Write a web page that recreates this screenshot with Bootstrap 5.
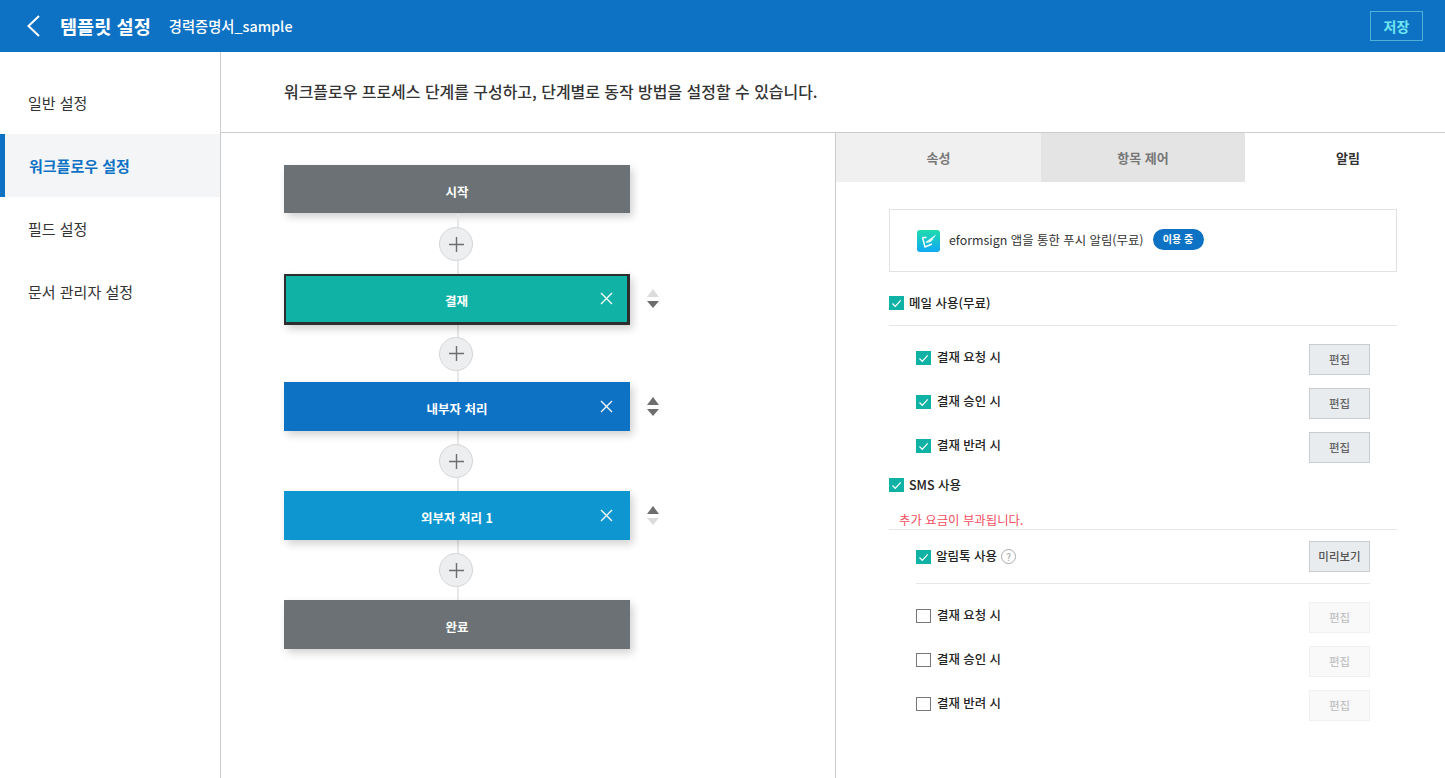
<!DOCTYPE html>
<html lang="ko">
<head>
  <meta charset="UTF-8" />
  <meta name="viewport" content="width=device-width, initial-scale=1" />
  <title>템플릿 설정</title>
  <link href="https://cdn.jsdelivr.net/npm/bootstrap@5.3.0/dist/css/bootstrap.min.css" rel="stylesheet" />
  <style>
    body {
      font-family: "Noto Sans CJK KR", "Noto Sans", sans-serif;
      font-size: 13px;
      color: #222;
      background: #fff;
      overflow: hidden;
    }
    .top-bar { height: 52px; background: #0e72c4; color: #fff; padding: 0 22px 0 26px; }
    .back-icon { width: 14px; height: 22px; margin-right: 20px; }
    .page-title { font-size: 18.6px; font-weight: 700; margin: 0 18px 0 0; }
    .doc-name { font-size: 14.3px; font-weight: 500; }
    .save-btn {
      width: 53px; height: 30px; padding: 0; border: 1px solid #4fb0d8; border-radius: 0;
      color: #6fe6f2; font-size: 14px; font-weight: 700; background: transparent;
    }
    .work-area { height: 726px; }
    .side-menu { width: 221px; padding-top: 19px; border-right: 1px solid #ccc; flex-shrink: 0; }
    .side-menu .nav-link {
      height: 63px; line-height: 63px; padding: 0 0 0 28px; color: #333; font-size: 15px;
    }
    .side-menu .nav-link.active {
      background: #f4f5f7; color: #0e72c4; font-weight: 700; border-left: 5px solid #0e72c4; padding-left: 24px;
    }
    .intro-bar { height: 81px; padding-left: 63px; border-bottom: 1px solid #ccc; font-size: 15.95px; font-weight: 500; color: #333; }
    .flow-pane { width: 615px; padding: 32px 0 0 63px; border-right: 1px solid #ccc; flex-shrink: 0; }
    .flow-row { width: 378px; }
    .flow-node {
      width: 346px; height: 49px; padding-top: 5px; color: #fff; font-size: 12.5px; font-weight: 700;
      box-shadow: 3px 4px 8px rgba(0, 0, 0, .18); flex-shrink: 0;
    }
    .node-gray { background: #6b7174; }
    .node-first { height: 48px; padding-top: 6px; margin-bottom: 1px; }
    .node-green { background: #10b2a5; height: 51px; padding-top: 4px; border-style: solid; border-color: #2d2d2d; border-width: 2px 3px 3px 2px; }
    .node-blue { background: #0e72c4; }
    .node-sky { background: #0e96d0; }
    .node-close { position: absolute; top: 18px; right: 17px; width: 13px; height: 13px; }
    .node-green .node-close { top: 16px; right: 14px; }
    .order-arrows { margin-left: 17px; gap: 4px; }
    .node-green + .order-arrows { margin-bottom: 3px; }
    .arrow-up, .arrow-down { width: 0; height: 0; border-left: 6.5px solid transparent; border-right: 6.5px solid transparent; }
    .arrow-up { border-bottom: 8px solid #6d6d6d; }
    .arrow-down { border-top: 7px solid #6d6d6d; }
    .arrow-up.off { border-bottom-color: #dcdcdc; }
    .arrow-down.off { border-top-color: #dcdcdc; }
    .flow-link { width: 346px; height: 60px; }
    .flow-link.after-selected { height: 57px; }
    .link-line { width: 2px; flex: 1; background: #e8e8e8; margin-left: 2px; }
    .add-step {
      width: 34px; height: 34px; padding: 0; border-radius: 50%; border: 1px solid #d4d6d8; background: #eceef0;
      margin-right: 2px; flex-shrink: 0;
    }
    .add-step svg { display: block; margin: auto; }
    .option-pane { width: 609px; }
    .option-tabs { height: 49px; }
    .option-tabs .nav-link {
      height: 49px; line-height: 50px; padding: 0; border-radius: 0; color: #777; font-size: 13px; font-weight: 700;
      background: #f0f0f0;
    }
    .option-tabs .tab-one { width: 205px; }
    .option-tabs .tab-two { width: 204px; background: #e4e4e4; }
    .option-tabs .tab-three { width: 200px; padding-left: 6px; }
    .option-tabs .nav-link.active { background: #fff; color: #333; }
    .option-body { padding: 27px 48px 0 53px; }
    .push-box { height: 63px; border: 1px solid #e2e2e2; padding-left: 27px; margin-bottom: 24px; }
    .app-logo { width: 23px; height: 22px; margin-right: 9px; }
    .push-text { color: #333; font-size: 12.4px; }
    .in-use { width: 51px; height: 21px; margin-left: 9px; margin-bottom: 2px; padding: 0; line-height: 20px; background: #0e72c4; font-size: 10px; font-weight: 700; }
    .form-check-input.mark-box {
      width: 15px; height: 14px; margin: 0 5px 0 0; border-radius: 0; border: 1px solid #777; flex-shrink: 0;
    }
    .form-check-input.mark-box:checked {
      background-color: #10b2a5; border-color: #10b2a5;
      background-image: url("data:image/svg+xml,%3csvg xmlns='http://www.w3.org/2000/svg' viewBox='0 0 15 14'%3e%3cpath fill='none' stroke='%23fff' stroke-width='1.2' d='M3.5 7.5l2.8 2.8 5.4-6'/%3e%3c/svg%3e");
      background-size: 15px 14px;
    }
    .check-label { color: #222; font-size: 12.5px; font-weight: 500; }
    .main-check { height: 14px; }
    .mail-check { margin-bottom: 15px; }
    .sep-line { height: 1px; background: #e6e6e6; }
    .sub-rows { padding: 10px 27px; }
    .sub-row { height: 44px; }
    .sub-row .mark-box { margin-right: 6px; }
    .sub-row .check-label { font-size: 12.4px; padding-bottom: 2px; }
    .edit-btn {
      width: 61px; height: 31px; margin-top: 3px; padding: 0; border-radius: 0; border: 1px solid #c9cdd0; background: #e9ecef;
      color: #666; font-size: 11.5px; font-weight: 500;
    }
    .edit-btn.preview { color: #555; margin-top: 0; }
    .edit-btn:disabled { background: #f9f9f9; border-color: #f0f0f0; color: #c4c4c4; opacity: 1; }
    .fee-note { color: #f04e5e; font-size: 12.4px; line-height: 14px; padding-left: 10px; margin-top: 21px; height: 16px; }
    .help-mark {
      width: 15px; height: 15px; margin-left: 4px; border: 1px solid #aaa; border-radius: 50%; color: #999;
      font-size: 10px; line-height: 13px; text-align: center;
    }
    .talk-rows { padding: 0 27px; }
    .talk-row { height: 53px; }
    .talk-row .mark-box { margin-right: 5px; }
    .talk-line { margin: 0 27px; }
  </style>
</head>
<body>

  <header class="top-bar d-flex align-items-center">
    <svg class="back-icon" viewBox="0 0 14 22"><path d="M13 1 2.5 11 13 21" fill="none" stroke="#fff" stroke-width="2"/></svg>
    <h1 class="page-title">템플릿 설정</h1>
    <span class="doc-name">경력증명서_sample</span>
    <button class="btn save-btn ms-auto" type="button">저장</button>
  </header>

  <div class="work-area d-flex">
    <nav class="side-menu nav flex-column flex-nowrap">
      <a class="nav-link" href="#">일반 설정</a>
      <a class="nav-link active" href="#">워크플로우 설정</a>
      <a class="nav-link" href="#">필드 설정</a>
      <a class="nav-link" href="#">문서 관리자 설정</a>
    </nav>

    <main class="flex-grow-1 d-flex flex-column">
      <div class="intro-bar d-flex align-items-center">워크플로우 프로세스 단계를 구성하고, 단계별로 동작 방법을 설정할 수 있습니다.</div>

      <div class="d-flex flex-grow-1">
        <section class="flow-pane">
          <div class="flow-row d-flex align-items-center">
            <div class="flow-node node-gray node-first d-flex align-items-center justify-content-center">시작</div>
          </div>
          <div class="flow-link d-flex flex-column align-items-center">
            <span class="link-line"></span>
            <button class="btn add-step" type="button"><svg width="15" height="15" viewBox="0 0 15 15"><path d="M7.5 0v15M0 7.5h15" stroke="#6e6e6e" stroke-width="1.4"/></svg></button>
            <span class="link-line"></span>
          </div>

          <div class="flow-row d-flex align-items-center">
            <div class="flow-node node-green position-relative d-flex align-items-center justify-content-center">결재
              <svg class="node-close" viewBox="0 0 13 13"><path d="M1 1l11 11M12 1 1 12" stroke="#fff" stroke-width="1.3"/></svg>
            </div>
            <div class="order-arrows d-flex flex-column">
              <span class="arrow-up off"></span>
              <span class="arrow-down"></span>
            </div>
          </div>
          <div class="flow-link after-selected d-flex flex-column align-items-center">
            <span class="link-line"></span>
            <button class="btn add-step" type="button"><svg width="15" height="15" viewBox="0 0 15 15"><path d="M7.5 0v15M0 7.5h15" stroke="#6e6e6e" stroke-width="1.4"/></svg></button>
            <span class="link-line"></span>
          </div>

          <div class="flow-row d-flex align-items-center">
            <div class="flow-node node-blue position-relative d-flex align-items-center justify-content-center">내부자 처리
              <svg class="node-close" viewBox="0 0 13 13"><path d="M1 1l11 11M12 1 1 12" stroke="#fff" stroke-width="1.3"/></svg>
            </div>
            <div class="order-arrows d-flex flex-column">
              <span class="arrow-up"></span>
              <span class="arrow-down"></span>
            </div>
          </div>
          <div class="flow-link d-flex flex-column align-items-center">
            <span class="link-line"></span>
            <button class="btn add-step" type="button"><svg width="15" height="15" viewBox="0 0 15 15"><path d="M7.5 0v15M0 7.5h15" stroke="#6e6e6e" stroke-width="1.4"/></svg></button>
            <span class="link-line"></span>
          </div>

          <div class="flow-row d-flex align-items-center">
            <div class="flow-node node-sky position-relative d-flex align-items-center justify-content-center">외부자 처리 1
              <svg class="node-close" viewBox="0 0 13 13"><path d="M1 1l11 11M12 1 1 12" stroke="#fff" stroke-width="1.3"/></svg>
            </div>
            <div class="order-arrows d-flex flex-column">
              <span class="arrow-up"></span>
              <span class="arrow-down off"></span>
            </div>
          </div>
          <div class="flow-link d-flex flex-column align-items-center">
            <span class="link-line"></span>
            <button class="btn add-step" type="button"><svg width="15" height="15" viewBox="0 0 15 15"><path d="M7.5 0v15M0 7.5h15" stroke="#6e6e6e" stroke-width="1.4"/></svg></button>
            <span class="link-line"></span>
          </div>

          <div class="flow-row d-flex align-items-center">
            <div class="flow-node node-gray d-flex align-items-center justify-content-center">완료</div>
          </div>
        </section>

        <section class="option-pane">
          <ul class="option-tabs nav flex-nowrap text-center">
            <li class="nav-item"><a class="nav-link tab-one" href="#">속성</a></li>
            <li class="nav-item"><a class="nav-link tab-two" href="#">항목 제어</a></li>
            <li class="nav-item"><a class="nav-link tab-three active" href="#">알림</a></li>
          </ul>

          <div class="option-body">
            <div class="push-box d-flex align-items-center">
              <svg class="app-logo" viewBox="0 0 23 22">
                <defs><linearGradient id="logoFill" x1="0" y1="0" x2="0" y2="1"><stop offset="0" stop-color="#1fdcab"/><stop offset="1" stop-color="#10a8f5"/></linearGradient></defs>
                <rect width="23" height="22" rx="3" fill="url(#logoFill)"/>
                <path d="M5.5 7.5h4M5.5 7.5l2.5 9.5 7-3" fill="none" stroke="#fff" stroke-width="1.4"/>
                <path d="M8.5 12 19 4.5l-1.5 3-2 1 1 .5-3 3-4 1z" fill="#dffaf6"/>
              </svg>
              <span class="push-text">eformsign 앱을 통한 푸시 알림(무료)</span>
              <span class="badge rounded-pill in-use">이용 중</span>
            </div>

            <div class="main-check mail-check d-flex align-items-center">
              <input class="form-check-input mark-box" type="checkbox" checked />
              <span class="check-label">메일 사용(무료)</span>
            </div>
            <div class="sep-line"></div>
            <div class="sub-rows">
              <div class="sub-row d-flex align-items-center">
                <input class="form-check-input mark-box" type="checkbox" checked />
                <span class="check-label">결재 요청 시</span>
                <button class="btn edit-btn ms-auto" type="button">편집</button>
              </div>
              <div class="sub-row d-flex align-items-center">
                <input class="form-check-input mark-box" type="checkbox" checked />
                <span class="check-label">결재 승인 시</span>
                <button class="btn edit-btn ms-auto" type="button">편집</button>
              </div>
              <div class="sub-row d-flex align-items-center">
                <input class="form-check-input mark-box" type="checkbox" checked />
                <span class="check-label">결재 반려 시</span>
                <button class="btn edit-btn ms-auto" type="button">편집</button>
              </div>
            </div>

            <div class="main-check d-flex align-items-center">
              <input class="form-check-input mark-box" type="checkbox" checked />
              <span class="check-label">SMS 사용</span>
            </div>
            <div class="fee-note">추가 요금이 부과됩니다.</div>
            <div class="sep-line"></div>
            <div class="talk-rows">
              <div class="talk-row d-flex align-items-center">
                <input class="form-check-input mark-box" type="checkbox" checked />
                <span class="check-label">알림톡 사용</span>
                <span class="help-mark">?</span>
                <button class="btn edit-btn preview ms-auto" type="button">미리보기</button>
              </div>
            </div>
            <div class="sep-line talk-line"></div>
            <div class="sub-rows">
              <div class="sub-row d-flex align-items-center">
                <input class="form-check-input mark-box" type="checkbox" />
                <span class="check-label">결재 요청 시</span>
                <button class="btn edit-btn ms-auto" type="button" disabled>편집</button>
              </div>
              <div class="sub-row d-flex align-items-center">
                <input class="form-check-input mark-box" type="checkbox" />
                <span class="check-label">결재 승인 시</span>
                <button class="btn edit-btn ms-auto" type="button" disabled>편집</button>
              </div>
              <div class="sub-row d-flex align-items-center">
                <input class="form-check-input mark-box" type="checkbox" />
                <span class="check-label">결재 반려 시</span>
                <button class="btn edit-btn ms-auto" type="button" disabled>편집</button>
              </div>
            </div>
          </div>
        </section>
      </div>
    </main>
  </div>

  <script src="https://cdn.jsdelivr.net/npm/bootstrap@5.3.0/dist/js/bootstrap.bundle.min.js"></script>
</body>
</html>
